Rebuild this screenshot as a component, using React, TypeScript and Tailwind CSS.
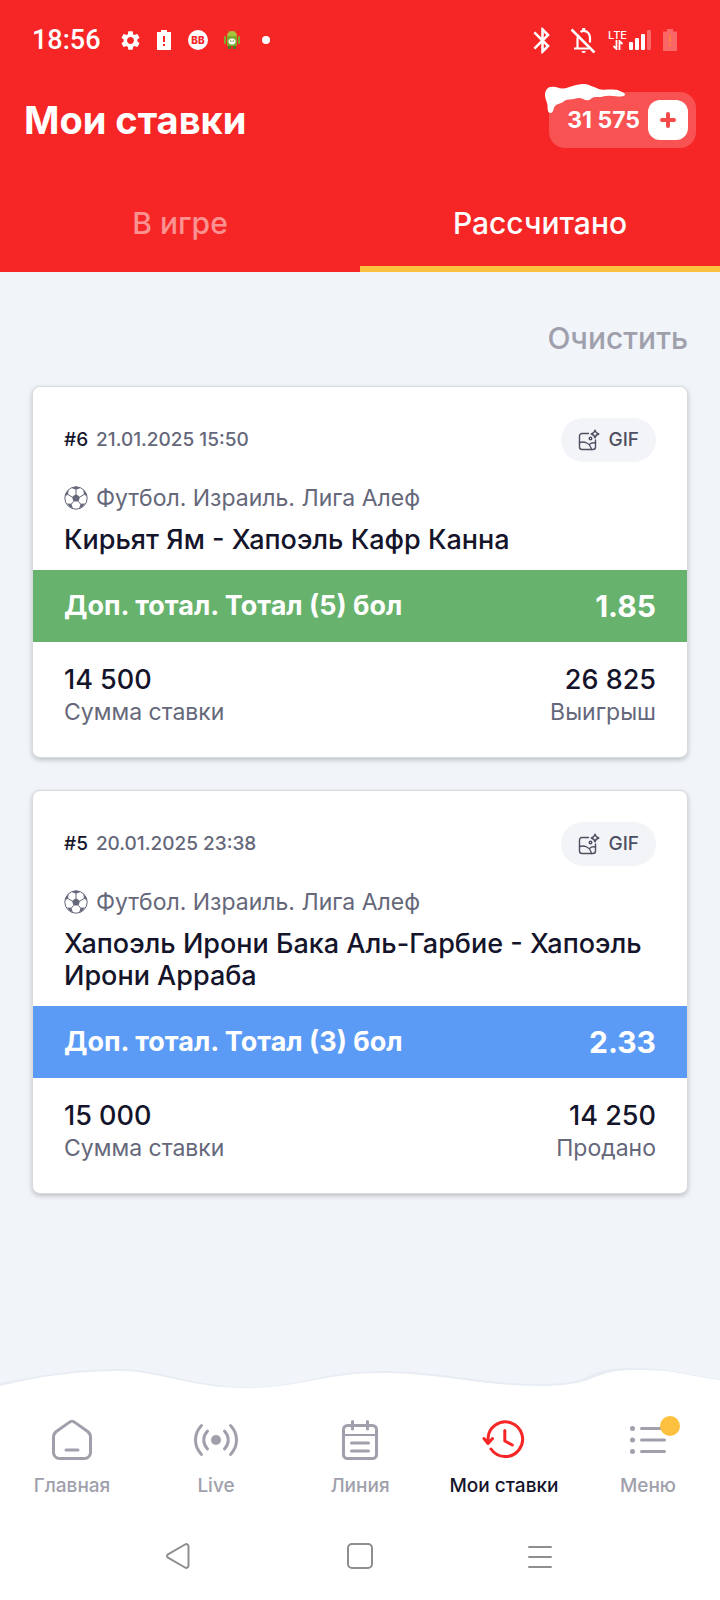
import * as React from "react"
import { MdBluetooth, MdSettings } from "react-icons/md"

type Bet = {
  id: number
  date: string
  league: string
  match: string
  outcome: string
  odds: string
  stake: string
  result: string
  resultLabel: string
  band: string
}

const bets: Bet[] = [
  {
    id: 6,
    date: "21.01.2025 15:50",
    league: "Футбол. Израиль. Лига Алеф",
    match: "Кирьят Ям - Хапоэль Кафр Канна",
    outcome: "Доп. тотал. Тотал (5) бол",
    odds: "1.85",
    stake: "14 500",
    result: "26 825",
    resultLabel: "Выигрыш",
    band: "bg-[#67b26d]",
  },
  {
    id: 5,
    date: "20.01.2025 23:38",
    league: "Футбол. Израиль. Лига Алеф",
    match: "Хапоэль Ирони Бака Аль-Гарбие - Хапоэль Ирони Арраба",
    outcome: "Доп. тотал. Тотал (3) бол",
    odds: "2.33",
    stake: "15 000",
    result: "14 250",
    resultLabel: "Продано",
    band: "bg-[#5b9bf6]",
  },
]

function RobotIcon() {
  return (
    <svg width="16" height="20" viewBox="0 0 16 20">
      <path d="M3 6a5 5 0 0 1 10 0z" fill="#a4c639" />
      <path d="M5 2 4 0M11 2l1-2" stroke="#a4702a" strokeWidth="1" />
      <rect x="0" y="6" width="2" height="8" rx="1" fill="#7cab2b" />
      <rect x="14" y="6" width="2" height="8" rx="1" fill="#7cab2b" />
      <rect x="3" y="6" width="10" height="10" rx="1" fill="#7cab2b" />
      <rect x="4" y="16" width="3" height="3" fill="#4d7a1e" />
      <rect x="9" y="16" width="3" height="3" fill="#4d7a1e" />
      <ellipse cx="8" cy="11.500" rx="3.500" ry="3" fill="#fff" />
      <circle cx="6.800" cy="11" r=".7" fill="#4d7a1e" />
      <circle cx="9.200" cy="11" r=".7" fill="#4d7a1e" />
    </svg>
  )
}

function BatteryLowIcon() {
  return (
    <svg width="14" height="20" viewBox="0 0 14 20">
      <path d="M0 2h4V0h6v2h4v18H0z" fill="#fff" />
      <path d="M7 6v6M7 14v2" stroke="#f62626" strokeWidth="2" />
    </svg>
  )
}

function BellOffIcon() {
  return (
    <svg width="26" height="27" viewBox="0 0 26 27" fill="none" stroke="#fff" strokeWidth="2.200">
      <path d="M4 21.500h15M7.500 21V12c0-1.800.4-3 1.200-4.200M10.500 5c1-.8 2-1.200 3.200-1.200 3.700 0 6.300 3.200 6.300 7.200v4.500" />
      <path d="M13.700 1v3" strokeWidth="3" />
      <path d="M11.500 24a2.200 2 0 0 0 4.400 0z" fill="#fff" stroke="none" />
      <path d="m1.500 2.500 23 23" strokeWidth="2.500" />
    </svg>
  )
}

function SignalIcon() {
  return (
    <svg width="22" height="20" viewBox="0 0 22 20" fill="#fff">
      <rect x="0" y="12" width="4" height="8" rx="1" />
      <rect x="6" y="8" width="4" height="12" rx="1" />
      <rect x="12" y="4" width="4" height="16" rx="1" />
      <rect x="18" y="0" width="4" height="20" rx="1" opacity=".3" />
    </svg>
  )
}

function StatusBar() {
  return (
    <div className="flex h-20 items-center justify-between pl-8 pr-[43px]">
      <div className="flex items-center">
        <span className="w-[81px] font-['Roboto',sans-serif] text-[27px] font-medium leading-8">18:56</span>
        <span className="flex w-[34px] justify-center"><MdSettings size={23} /></span>
        <span className="flex w-[34px] justify-center"><BatteryLowIcon /></span>
        <span className="flex w-[34px] justify-center">
          <span className="flex size-5 items-center justify-center rounded-full bg-white text-[10px] font-extrabold leading-none text-[#f62626]">BB</span>
        </span>
        <span className="flex w-[34px] justify-center"><RobotIcon /></span>
        <span className="flex w-[34px] justify-center"><span className="size-2 rounded-full bg-white" /></span>
      </div>
      <div className="flex items-center">
        <MdBluetooth size={31} />
        <span className="ml-3 mr-3"><BellOffIcon /></span>
        <div className="flex items-end gap-0.5">
          <div className="flex flex-col items-center">
            <span className="text-[11px] font-medium leading-[10px]">LTE</span>
            <svg width="12" height="10" viewBox="0 0 12 10" fill="none" stroke="#fff" strokeWidth="1.800">
              <path d="M4.500 0v9L1.500 6M7.500 10V1l3 3" />
            </svg>
          </div>
          <SignalIcon />
        </div>
        <svg width="14" height="22" viewBox="0 0 14 22" className="ml-3">
          <path d="M0 2.500h4V0h6v2.500h4V22H0z" fill="#fff" opacity=".3" />
          <path d="M7 6v7M7 15v2" stroke="#fb7f43" strokeWidth="2" />
        </svg>
      </div>
    </div>
  )
}

function Header() {
  return (
    <header className="bg-[#f62626] text-white">
      <StatusBar />
      <div className="flex h-20 items-center justify-between px-6">
        <h1 className="text-[38px] font-bold leading-10">Мои ставки</h1>
        <div className="relative flex h-14 items-center gap-2 rounded-2xl bg-[#f85252] pl-[18px] pr-2">
          <svg width="80" height="29" viewBox="0 0 80 29" className="absolute -left-1 -top-2" fill="#fff">
            <path d="M0 11C0 6 3 2.500 8 2.800c4 0 6 2 10 1.700C25 4 30 0 38 0c5 0 7 1.500 11 3s6 3 10 2.800c5-.3 11-.6 14 .4 3 1.200 7 2.500 7 4.300 0 1.800-5 2.500-9 1.800-5-.8-10-1-15 .7-5 0-7-.8-10 1.700-2.500 2.200-5 2-8 .2-3-1.600-6-.7-9 0-4 .8-7 0-10 2.300-2 2-4 1.800-7 3.300C9 22 9 24 8 27c-.6 2.500-4.500 2.500-5 0-.8-3 0-5-1-8-.8-3-2-5-2-8z" />
          </svg>
          <span className="text-[23px] font-bold leading-7">31 575</span>
          <button type="button" aria-label="Пополнить" className="flex size-10 items-center justify-center rounded-xl bg-white">
            <svg width="16" height="16" viewBox="0 0 16 16" fill="none" stroke="#f54a4a" strokeWidth="4" strokeLinecap="round">
              <path d="M8 2v12M2 8h12" />
            </svg>
          </button>
        </div>
      </div>
      <div role="tablist" className="grid h-28 grid-cols-2 text-3xl font-medium">
        <button type="button" role="tab" aria-selected="false" className="border-b-6 border-transparent pt-5 text-[#fb9292]">В игре</button>
        <button type="button" role="tab" aria-selected="true" className="border-b-6 border-[#fdc13f] pt-5">Рассчитано</button>
      </div>
    </header>
  )
}

function BallIcon() {
  return (
    <svg width="24" height="24" viewBox="0 0 24 24" className="shrink-0">
      <circle cx="12" cy="12" r="11.200" fill="none" stroke="#65677a" strokeWidth="1" />
      <g fill="#65677a">
        <path d="m12 8 4 2.900-1.500 4.700h-5L8 10.900z" />
        <path d="M7.500 2 12 3.800 16.500 2 12 .5z" />
        <path d="m1 10.500 3-2 .8-4.700A12 12 0 0 0 1 10.500zM23 10.500l-3-2-.8-4.700a12 12 0 0 1 3.800 6.700z" />
        <path d="m3 17.500 4.300.3L9 22.500a12 12 0 0 1-6-5zM21 17.500l-4.300.3-1.700 4.700a12 12 0 0 0 6-5z" />
      </g>
      <path d="M12 8V3.500M16 11l4-2.500M14.500 15.500l2.500 3M9.500 15.500 7 18.500M8 11 4 8.500" stroke="#65677a" strokeWidth="1" />
    </svg>
  )
}

function GifIcon() {
  return (
    <svg width="22" height="22" viewBox="0 0 22 22" fill="none" stroke="#4e5062" strokeWidth="1.400" strokeLinecap="round" strokeLinejoin="round">
      <path d="M10.500 4.500H4a2.500 2.500 0 0 0-2.500 2.500v11A2.500 2.500 0 0 0 4 20.500h11a2.500 2.500 0 0 0 2.500-2.500v-7" />
      <path d="M1.500 13.500c5-1.500 10.500.5 12 7M11.500 15.500c1.500-1.500 3.500-2 6-1.500" />
      <circle cx="12.500" cy="9.500" r="1.300" />
      <path d="M17 1.200c.5 2.400 1.200 3.200 3.800 3.800-2.600.6-3.300 1.400-3.800 3.800-.5-2.400-1.200-3.200-3.800-3.800 2.600-.6 3.300-1.400 3.800-3.800z" />
    </svg>
  )
}

function BetCard({ bet }: { bet: Bet }) {
  return (
    <article className="rounded-lg border border-[#d9dade] bg-white text-[#14142b] shadow-[0_2px_5px_rgba(0,0,0,0.22)]">
      <div className="px-[31px] pb-3.5 pt-[31px]">
        <div className="flex h-11 items-center justify-between">
          <p className="flex gap-2 text-[19px] font-medium">
            <span>#{bet.id}</span>
            <time className="text-[#65677a]">{bet.date}</time>
          </p>
          <button type="button" className="flex h-11 items-center gap-2 rounded-full bg-[#f3f4f8] px-[17px] text-[19px] font-medium text-[#4e5062]">
            <GifIcon />
            GIF
          </button>
        </div>
        <p className="mt-[22px] flex items-center gap-2 text-[23px] leading-7 text-[#65677a]">
          <BallIcon />
          {bet.league}
        </p>
        <h2 className="mt-3 text-[27px] font-medium leading-8">{bet.match}</h2>
      </div>
      <div className={`flex h-[72px] items-center justify-between px-[31px] font-bold text-white ${bet.band}`}>
        <span className="text-[27px]">{bet.outcome}</span>
        <span className="text-3xl">{bet.odds}</span>
      </div>
      <dl className="flex justify-between px-[31px] pb-[29px] pt-[22px] leading-8">
        <div className="flex flex-col-reverse">
          <dt className="text-[23px] text-[#65677a]">Сумма ставки</dt>
          <dd className="text-[27px] font-medium">{bet.stake}</dd>
        </div>
        <div className="flex flex-col-reverse text-right">
          <dt className="text-[23px] text-[#65677a]">{bet.resultLabel}</dt>
          <dd className="text-[27px] font-medium">{bet.result}</dd>
        </div>
      </dl>
    </article>
  )
}

const navItems = [
  {
    label: "Главная",
    icon: (
      <path d="M5.500 21c0-2.500 1-4 2.800-5.500l12.500-8.900a5 5 0 0 1 6.400 0l12.500 8.900c1.800 1.500 2.800 3 2.800 5.500v15.500a6 6 0 0 1-6 6h-25a6 6 0 0 1-6-6zM18 34h12" />
    ),
  },
  {
    label: "Live",
    icon: (
      <>
        <circle cx="24" cy="24" r="5" fill="currentColor" stroke="none" />
        <path d="M9.500 9.500c-8 8.500-8 20.500 0 29M38.500 9.500c8 8.500 8 20.500 0 29M15.500 15c-5 5.500-5 12.500 0 18M32.500 15c5 5.500 5 12.500 0 18" />
      </>
    ),
  },
  {
    label: "Линия",
    icon: (
      <>
        <rect x="7.500" y="9.500" width="33" height="33" rx="4" />
        <path d="M16.500 5.500V13M31.500 5.500V13M15.500 27h17M15.500 35h17" />
        <path d="M8 19h32" strokeWidth="2" />
      </>
    ),
  },
  {
    label: "Мои ставки",
    active: true,
    icon: <path d="M8 27.500V23A17.300 17.300 0 1 1 11 33M4 22.500l4 5 4.500-5M8 24.500v3M24.800 14.500V25l7.500 4" />,
  },
  {
    label: "Меню",
    badge: true,
    icon: (
      <>
        <path d="M17.500 12.500h23M17.500 24h23M17.500 35.500h23" />
        <path d="M8.500 12.500h.01M8.500 24h.01M8.500 35.500h.01" strokeWidth="5" />
      </>
    ),
  },
]

function BottomNav() {
  return (
    <footer>
      <svg viewBox="0 0 720 26" preserveAspectRatio="none" className="block h-[26px] w-full">
        <path d="M0 17C40 9 80 3 120 3S190 20 245 21S320 5 382 5S480 18 540 18S580 2 630 2S680 9 720 13V26H0z" fill="#e8edf4" />
        <path d="M0 20C40 10 80 5 120 5S190 22 245 22S325 7 382 7S480 20 540 20S590 4 635 4S680 9 720 14V26H0z" fill="#fff" />
      </svg>
      <div className="bg-white">
        <nav className="grid grid-cols-5 pb-3.5 pt-6">
          {navItems.map((item) => (
            <a
              key={item.label}
              href="#"
              aria-current={item.active ? "page" : undefined}
              className="flex flex-col items-center gap-2.5 text-[#a0a0ac]"
            >
              <span className={item.active ? "relative text-[#f62626]" : "relative"}>
                <svg width="48" height="48" viewBox="0 0 48 48" fill="none" stroke="currentColor" strokeWidth="3" strokeLinecap="round" strokeLinejoin="round">
                  {item.icon}
                </svg>
                {item.badge && <span className="absolute -right-2 top-0 size-5 rounded-full bg-[#fdc13f]" />}
              </span>
              <span className={item.active ? "whitespace-nowrap text-[19px] font-medium leading-6 text-[#14142b]" : "text-[19px] font-medium leading-6"}>
                {item.label}
              </span>
            </a>
          ))}
        </nav>
        <SystemBar />
      </div>
    </footer>
  )
}

function SystemBar() {
  return (
    <div className="grid h-[88px] grid-cols-3 items-center justify-items-center px-[12.5%]">
      <button type="button" aria-label="Назад">
        <svg width="28" height="28" viewBox="0 0 28 28" fill="none" stroke="#8e8e8e" strokeWidth="2">
          <path d="M19 2.500 2 12.300a2 2 0 0 0 0 3.400L19 25.500a2.300 2.300 0 0 0 3.500-2V4.500a2.300 2.300 0 0 0-3.500-2z" />
        </svg>
      </button>
      <button type="button" aria-label="Домой">
        <svg width="28" height="28" viewBox="0 0 28 28" fill="none" stroke="#8e8e8e" strokeWidth="2">
          <rect x="2" y="2" width="24" height="24" rx="4" />
        </svg>
      </button>
      <button type="button" aria-label="Недавние">
        <svg width="28" height="28" viewBox="0 0 28 28" stroke="#8e8e8e" strokeWidth="2" strokeLinecap="round">
          <path d="M3 5h22M3 15h22M3 25h22" />
        </svg>
      </button>
    </div>
  )
}

export default function App() {
  return (
    <div className="flex min-h-screen flex-col bg-[#f1f5fa] font-['Inter',sans-serif]">
      <Header />
      <main className="flex flex-1 flex-col px-8 pb-8 pt-[46px]">
        <button type="button" className="mb-7 h-10 self-end text-3xl font-medium leading-10 text-[#a0a0ac]">Очистить</button>
        <div className="flex flex-col gap-8">
          {bets.map((bet) => (
            <BetCard key={bet.id} bet={bet} />
          ))}
        </div>
      </main>
      <BottomNav />
    </div>
  )
}
